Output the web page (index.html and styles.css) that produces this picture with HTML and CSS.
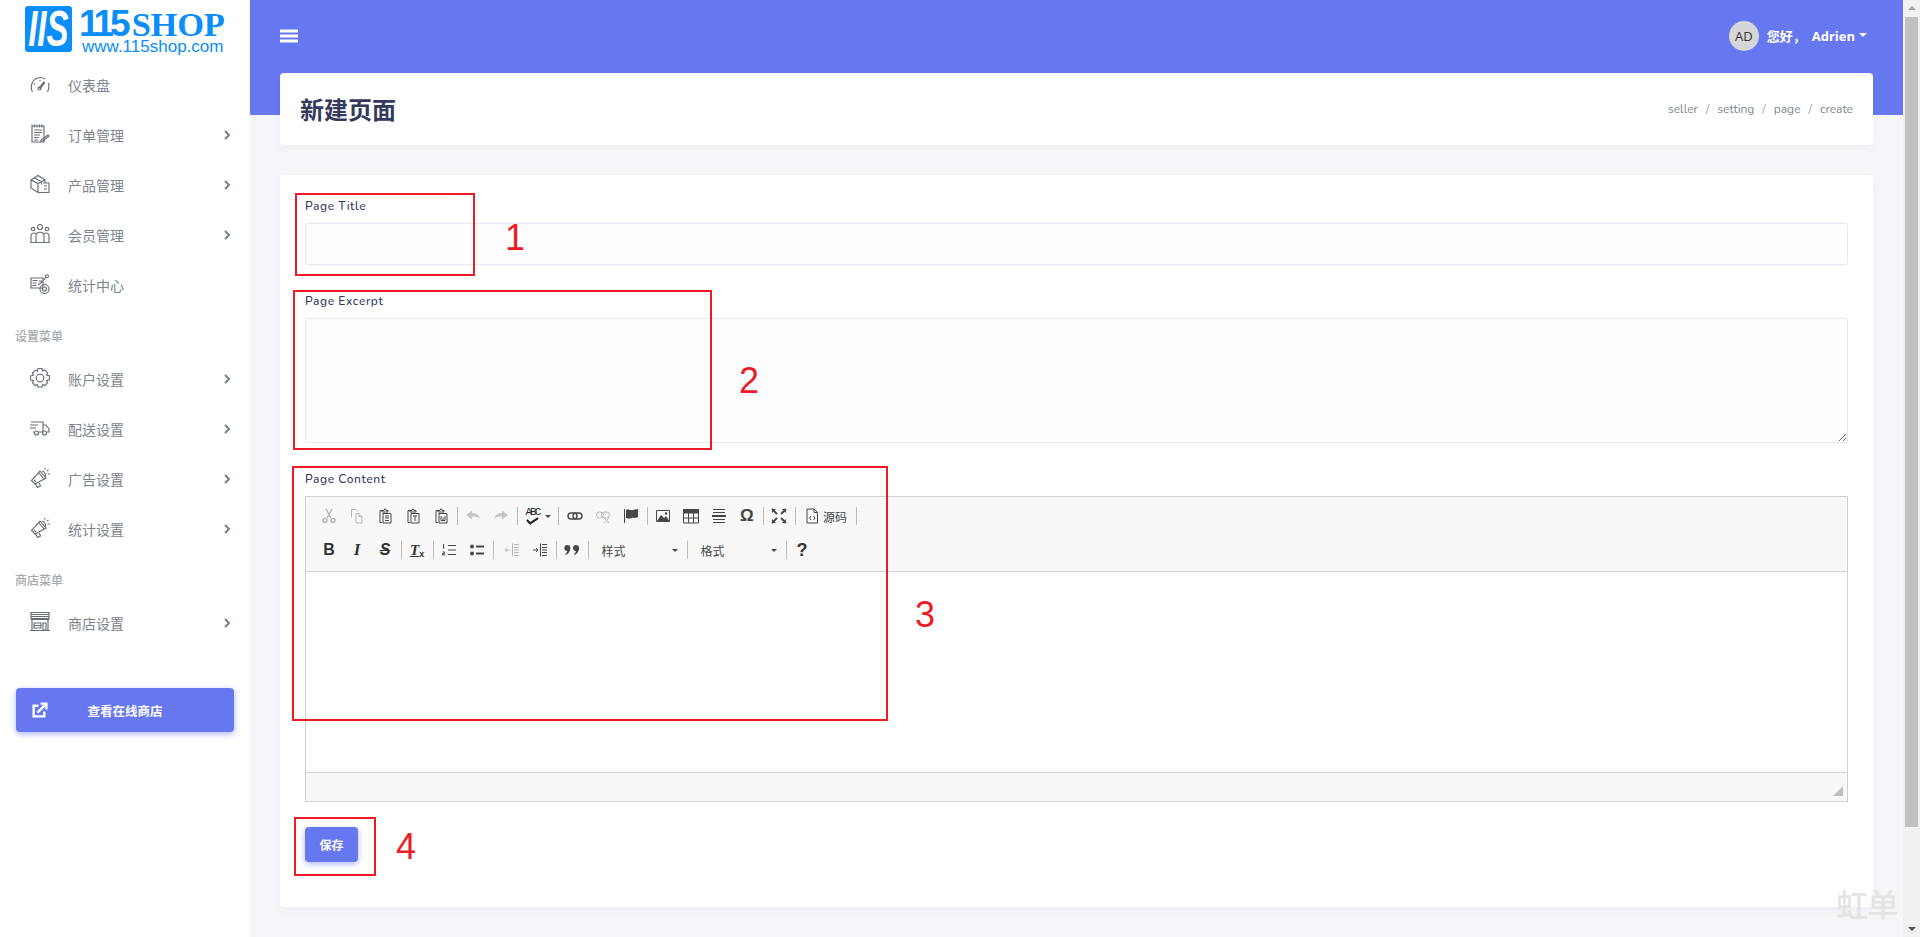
FILE: index.html
```html
<!DOCTYPE html>
<html lang="zh">
<head>
<meta charset="utf-8">
<title>新建页面</title>
<link rel="stylesheet" href="styles.css">
</head>
<body>
<div class="app">
  <aside class="sidebar">
    <div class="logo">
      <div class="logo-tile"><span>IIS</span></div>
      <div class="logo-text">
        <div class="logo-name"><b>115</b><i>SHOP</i></div>
        <div class="logo-url">www.115shop.com</div>
      </div>
    </div>
    <nav class="menu">
      <a class="item"><svg class="ic" viewBox="0 0 20 20"><path d="M2.500 18C-.5 12 2.500 4 10 3.500c2 0 3.500.5 5 1.500M18.500 9c.8 3 .4 6-1 9M4 9.500l1 1M10 6v1"/><path class="ndl" d="M9.500 14.500l5-6.500"/><circle cx="9.500" cy="14.500" r="1.500"/></svg><span>仪表盘</span></a>
      <a class="item"><svg class="ic" viewBox="0 0 20 20"><path d="M2 2h12v16H2zM2 .5v3M4.500 .5v3M7 .5v3M9.500 .5v3M12 .5v3M4 6h8M4 8.500h8M4 11h6M4 13.500h5M4 16h4"/><path d="M11 16l7-5 1 1-6 5-2 .5z"/></svg><span>订单管理</span><svg class="chev" viewBox="0 0 6 10"><path d="M1 1l4 4-4 4"/></svg></a>
      <a class="item"><svg class="ic" viewBox="0 0 20 20"><path d="M1 6l7-4.500L15 6l-7 3.500zM1 6v8l7 4.500V9.500M15 6v3M8 18.500h11V9h-6M4.500 4l7 3.500v3"/><path d="M14 12h3M14 15h3"/></svg><span>产品管理</span><svg class="chev" viewBox="0 0 6 10"><path d="M1 1l4 4-4 4"/></svg></a>
      <a class="item"><svg class="ic" viewBox="0 0 20 20"><circle cx="10" cy="3" r="2.500"/><circle cx="3" cy="5" r="1.700"/><circle cx="17" cy="5" r="1.700"/><path d="M6 18.500V12c0-5 8-5 8 0v6.500zM6 18.500H1V12c0-3 3-3.500 5-2.500M14 18.500h5V12c0-3-3-3.500-5-2.500"/></svg><span>会员管理</span><svg class="chev" viewBox="0 0 6 10"><path d="M1 1l4 4-4 4"/></svg></a>
      <a class="item"><svg class="ic" viewBox="0 0 20 20"><path d="M1 4h12v10H1zM2.500 6.500h5M2.500 9h4M2.500 11.500h4M9 7h3M8 11l4-3 4-5"/><circle cx="17" cy="2.200" r="1.500"/><circle cx="14.500" cy="15" r="4.500"/><circle cx="14.500" cy="15" r="2"/></svg><span>统计中心</span></a>
      <div class="section">设置菜单</div>
      <a class="item"><svg class="ic" viewBox="0 0 20 20"><path d="M8 .5h4l.6 2.500 2.200-1 2.800 2.800-1 2.200 2.900.8v4l-2.900.7 1 2.200-2.800 2.800-2.200-1-.6 2.500H8l-.6-2.500-2.200 1-2.800-2.800 1-2.200L.5 12V8l2.900-.8-1-2.200 2.800-2.800 2.200 1z"/><circle cx="10" cy="10" r="3.800"/></svg><span>账户设置</span><svg class="chev" viewBox="0 0 6 10"><path d="M1 1l4 4-4 4"/></svg></a>
      <a class="item"><svg class="ic" viewBox="0 0 20 20"><path d="M1 4h12v10H9M13 7h3l3 4v3h-2M12.500 14H12M0 7h8M0 10h6M3 14h1.500"/><circle cx="6.500" cy="15" r="2"/><circle cx="14.500" cy="15" r="2"/></svg><span>配送设置</span><svg class="chev" viewBox="0 0 6 10"><path d="M1 1l4 4-4 4"/></svg></a>
      <a class="item"><svg class="ic" viewBox="0 0 20 20"><path d="M10 3l6 7-11 6-3.500-3.500zM5.500 15.500l2 4 3-1.500-2-4.500M9 5l5.500 6.500M12 3.500c1.500-1 4 2 3.500 5"/><path d="M14.500 1.500l.8-1.500M17 3l1.500-1M17.500 6H20M4 12l2 2"/></svg><span>广告设置</span><svg class="chev" viewBox="0 0 6 10"><path d="M1 1l4 4-4 4"/></svg></a>
      <a class="item"><svg class="ic" viewBox="0 0 20 20"><path d="M10 3l6 7-11 6-3.500-3.500zM5.500 15.500l2 4 3-1.500-2-4.500M9 5l5.500 6.500M12 3.500c1.500-1 4 2 3.500 5"/><path d="M14.500 1.500l.8-1.500M17 3l1.500-1M17.500 6H20M4 12l2 2"/></svg><span>统计设置</span><svg class="chev" viewBox="0 0 6 10"><path d="M1 1l4 4-4 4"/></svg></a>
      <div class="section section-2">商店菜单</div>
      <a class="item"><svg class="ic" viewBox="0 0 20 20"><path d="M1 .5h18v6H1zM1 2.500h18M1 4.500h18M1 7.500h18M2 8v10M18 8v10M0 18.500h20M4 11h7v5H4zM4 13.500h7M13 11h3v7h-3z"/></svg><span>商店设置</span><svg class="chev" viewBox="0 0 6 10"><path d="M1 1l4 4-4 4"/></svg></a>
    </nav>
    <a class="shop-btn"><svg class="ext" viewBox="0 0 16 16"><path d="M12.500 9v4.500h-10v-10H7"/><path d="M6 10l8-8M9 1.500h5.500V7" /></svg><span>查看在线商店</span></a>
  </aside>

  <main class="main">
    <section class="hero">
      <div class="topbar">
        <svg class="burger" viewBox="0 0 18 14"><path d="M0 2h18M0 7h18M0 12h18"/></svg>
        <div class="user"><span class="avatar">AD</span><span class="hello">您好， Adrien</span><span class="caret"></span></div>
      </div>
      <div class="title-card">
        <h1>新建页面</h1>
        <div class="crumbs"><span>seller</span><em>/</em><span>setting</span><em>/</em><span>page</span><em>/</em><span>create</span></div>
      </div>
    </section>

    <section class="card">
      <label class="lbl">Page Title</label>
      <input class="field" type="text">
      <label class="lbl lbl-excerpt">Page Excerpt</label>
      <textarea class="field area"></textarea>
      <label class="lbl lbl-content">Page Content</label>

      <div class="editor">
        <div class="tools">
          <div class="row">
            <span class="b off"><svg viewBox="0 0 16 16"><path d="M5 1l5 9M11 1L6 10"/><circle cx="4" cy="12.500" r="2"/><circle cx="12" cy="12.500" r="2"/></svg></span>
            <span class="b off"><svg class="thin" viewBox="0 0 16 16"><path d="M2.500 9.500v-8H7l2 2M7 5.500h3l3 3v6.500H7zM10 5.500v3h3"/></svg></span>
            <span class="b"><svg class="thin" viewBox="0 0 16 16"><path d="M5 2.500H3v12h2M11 3V2.500H9L8.500 1h-1L7 2.500H5V4h6zM6 5.500h8v9.500H6zM8 8h4M8 10h4M8 12.500h4"/></svg></span>
            <span class="b"><svg class="thin" viewBox="0 0 16 16"><path d="M5 2.500H3v12h2M11 3V2.500H9L8.500 1h-1L7 2.500H5V4h6zM6 5.500h8v9.500H6zM8 8h4M10 8v5"/></svg></span>
            <span class="b"><svg class="thin" viewBox="0 0 16 16"><path d="M5 2.500H3v12h2M11 3V2.500H9L8.500 1h-1L7 2.500H5V4h6zM6 5.500h8v9.500H6zM8 8v4.500h4V8M10 9.500v3"/></svg></span>
            <i class="sep"></i>
            <span class="b off"><svg class="solid" viewBox="0 0 16 16"><path d="M1 7l6-4.500V5c4 0 7 2 8 6-2-2-4-2.800-8-2.500v3z"/></svg></span>
            <span class="b off"><svg class="solid" viewBox="0 0 16 16"><path d="M15 7L9 2.500V5c-4 0-7 2-8 6 2-2 4-2.800 8-2.500v3z"/></svg></span>
            <i class="sep"></i>
            <span class="b spell"><span class="abc">ABC</span><svg class="chk" viewBox="0 0 16 8"><path d="M2 3l3.500 3.500L14 1"/></svg><i class="arrow"></i></span>
            <i class="sep"></i>
            <span class="b"><svg class="link" viewBox="0 0 16 16"><rect x="1" y="5" width="9" height="6" rx="3"/><rect x="6" y="5" width="9" height="6" rx="3"/></svg></span>
            <span class="b off"><svg class="thin" viewBox="0 0 16 16"><rect x="1.500" y="4" width="7" height="6" rx="3"/><rect x="6.500" y="4" width="8" height="6" rx="3"/><path d="M9 10l5 5M14 10l-5 5"/></svg></span>
            <span class="b"><svg class="thin" viewBox="0 0 16 16"><path d="M1.500 1v14"/><path class="fill" d="M3 2c3-1.500 4 1 7 0s3-.5 5-1v8c-3 1.500-4 .5-6 1s-4 1-6 0z"/></svg></span>
            <i class="sep"></i>
            <span class="b"><svg class="thin" viewBox="0 0 16 16"><path d="M1.500 2.500h13v11h-13z"/><path class="fill" d="M2 13l4-6 3 3 2-2 3.500 5z"/><circle class="fill" cx="11" cy="5.500" r="1.200"/></svg></span>
            <span class="b"><svg class="thin" viewBox="0 0 16 16"><path class="fill" d="M0 1h16v4H0z"/><path d="M.5 1v14h15V1M.5 10h15M5.500 5v10M10.500 5v10M.5 5h15"/></svg></span>
            <span class="b"><svg class="thin" viewBox="0 0 16 16"><path d="M2 1.500h12M2 4.500h12M2 11.500h12M2 14.500h12"/><path class="thickline" d="M1 8h14"/></svg></span>
            <span class="b omega">Ω</span>
            <i class="sep"></i>
            <span class="b"><svg class="thick" viewBox="0 0 16 16"><path d="M1 1l5 5M15 1l-5 5M1 15l5-5M15 15l-5-5"/><path class="fill" d="M1 1h4L1 5zM15 1h-4l4 4zM1 15h4l-4-4zM15 15h-4l4-4z"/></svg></span>
            <i class="sep sep-wide"></i>
            <span class="b source"><svg class="thin" viewBox="0 0 16 16"><path d="M3 1h7l3.500 3.500V15H3zM10 1v3.500h3.500M7 8L5.500 10 7 12M9.500 8l1.500 2-1.500 2"/></svg><span>源码</span></span>
            <i class="sep sep-end"></i>
          </div>
          <div class="row row-2">
            <span class="b glyph"><b>B</b></span>
            <span class="b glyph"><b class="it">I</b></span>
            <span class="b glyph"><b class="strike">S</b></span>
            <i class="sep"></i>
            <span class="b tx"><b>T</b><sub>x</sub></span>
            <i class="sep"></i>
            <span class="b"><svg class="thin" viewBox="0 0 16 16"><path d="M7 3.500h8M7 8h8M7 12.500h8"/><path d="M2.500 2v4M2 6h1.500M1.500 10h2v1.500h-2V13h2.500"/></svg></span>
            <span class="b"><svg class="thin" viewBox="0 0 16 16"><circle class="fill" cx="3" cy="4.500" r="2"/><circle class="fill" cx="3" cy="11.500" r="2"/><path class="thickline" d="M7 4.500h8M7 11.500h8"/></svg></span>
            <i class="sep sep-g"></i>
            <span class="b off"><svg class="thin" viewBox="0 0 16 16"><path d="M8.500 1.500v13M10 2.500h5M10 5.500h5M10 8h5M10 10.500h5M10 13.500h5M1 8h5M3 6L1 8l2 2"/></svg></span>
            <span class="b"><svg class="thin" viewBox="0 0 16 16"><path d="M8.500 1.500v13M10 2.500h5M10 5.500h5M10 8h5M10 10.500h5M10 13.500h5M1 8h5M4 6l2 2-2 2"/></svg></span>
            <i class="sep"></i>
            <span class="b"><svg class="quote" viewBox="0 0 16 16"><circle cx="3.300" cy="6" r="3"/><circle cx="12" cy="6" r="3"/><path d="M6.300 6c0 3.500-2 6-4.500 7l-.5-1c1.500-1 2-2.500 2-4zM15 6c0 3.500-2 6-4.500 7l-.5-1c1.500-1 2-2.500 2-4z"/></svg></span>
            <i class="sep"></i>
            <span class="combo"><span>样式</span><i class="arrow"></i></span>
            <i class="sep"></i>
            <span class="combo"><span>格式</span><i class="arrow"></i></span>
            <i class="sep"></i>
            <span class="b help">?</span>
          </div>
        </div>
        <div class="edit-body"></div>
        <div class="edit-foot"><i class="grip"></i></div>
      </div>

      <button class="save" type="button">保存</button>
    </section>
  </main>

  <div class="scrollbar">
    <i class="sb-up"></i>
    <div class="sb-track"><div class="sb-thumb"></div></div>
    <i class="sb-down"></i>
  </div>
</div>

<div class="mark m1"></div><div class="num n1">1</div>
<div class="mark m2"></div><div class="num n2">2</div>
<div class="mark m3"></div><div class="num n3">3</div>
<div class="mark m4"></div><div class="num n4">4</div>
<div class="watermark">虹单</div>
</body>
</html>
```
FILE: styles.css
```css
* { box-sizing: border-box; }
html, body { margin: 0; height: 937px; overflow: hidden; }
body { font-family: "Nunito", "Open Sans", "Noto Sans CJK SC", sans-serif; font-size: 14px; color: #34395e; background: #f4f6f9; position: relative; }
i, em { font-style: normal; }

.app { display: flex; height: 937px; }

/* sidebar */
.sidebar { width: 250px; flex: none; background: #fff; display: flex; flex-direction: column; }
.logo { height: 60px; padding: 6px 0 0 25px; display: flex; gap: 7px; }
.logo-tile { width: 47px; height: 46px; border-radius: 3px; background: #0b8ef8; color: #fff; display: flex; align-items: center; justify-content: center; }
.logo-tile span { font: italic 700 30px/30px "Liberation Sans", sans-serif; transform: scale(1.1, 1.65); letter-spacing: 0; }
.logo-text { color: #0b8ef8; }
.logo-name { height: 33px; padding-top: 2px; white-space: nowrap; display: flex; align-items: center; }
.logo-name b { font: 700 37px/30px "Liberation Sans", sans-serif; letter-spacing: -4px; margin-right: 5px; }
.logo-name i { font: 700 34.500px/30px "Liberation Serif", serif; letter-spacing: -.3px; }
.logo-url { font: 17px/16px "Liberation Sans", sans-serif; padding-left: 3px; white-space: nowrap; }

.menu { display: flex; flex-direction: column; }
.item { height: 50px; display: flex; align-items: center; padding: 0 20px 0 30px; color: #7d848d; font-size: 14px; font-family: "Noto Sans CJK SC", sans-serif; }
.item span { flex: 1; margin-left: 18px; margin-top: -1px; }
.ic { width: 20px; height: 20px; fill: none; stroke: #666e77; stroke-width: 1.150; flex: none; margin-top: -3px; }
.ic .ndl { stroke-width: 2.200; }
.chev { width: 6px; height: 10px; fill: none; stroke: #7a828a; stroke-width: 2; }
.section { height: 44px; padding: 16px 0 0 15px; font: 500 12px/20px "Noto Sans CJK SC", sans-serif; color: #a4a9ae; }
.section-2 { height: 44px; }

.shop-btn { margin: 40px 0 0 16px; width: 218px; height: 44px; background: #6777ef; border-radius: 4px; box-shadow: 0 2px 6px #acb5f6; color: #fff; display: flex; align-items: center; font: 700 12.500px "Noto Sans CJK SC", sans-serif; }
.ext { width: 17px; height: 17px; margin-left: 15px; fill: none; stroke: #fff; stroke-width: 2.200; }
.shop-btn span { flex: 1; text-align: center; padding-right: 32px; }

/* main */
.main { flex: 1; min-width: 0; }
.hero { height: 115px; background: #6777ef; padding: 0 30px; }
.topbar { height: 73px; padding-bottom: 2px; display: flex; align-items: center; justify-content: space-between; }
.burger { width: 18px; height: 14px; fill: none; stroke: #fff; stroke-width: 3; }
.user { display: flex; align-items: center; color: #fff; margin-right: 6px; }
.avatar { width: 30px; height: 30px; border-radius: 50%; background: #d6d6d6; color: #333; font-size: 13px; display: flex; align-items: center; justify-content: center; margin-right: 8px; font-family: "Open Sans", sans-serif; }
.hello { font: 700 13px "Open Sans", "Noto Sans CJK SC", sans-serif; white-space: pre; word-spacing: 2.500px; }
.caret { margin-left: 4px; border: 4px solid transparent; border-top-color: #fff; border-bottom: 0; margin-top: -2px; }

.title-card { height: 72px; background: #fff; border-radius: 4px; box-shadow: 0 4px 8px rgba(0,0,0,.03); display: flex; align-items: center; justify-content: space-between; padding: 0 20px; }
h1 { margin: 0; font: 700 24px/30px "Noto Sans CJK SC", sans-serif; color: #34395e; }
.crumbs { display: flex; gap: 7px; font-size: 12px; color: #7d8890; }
.crumbs em { color: #98a6ad; margin: 0 1px; }

.card { margin: 60px 30px 0; height: 732px; background: #fff; border-radius: 4px; box-shadow: 0 4px 8px rgba(0,0,0,.03); padding: 23px 25px 0; }
.lbl { display: block; font-size: 12px; line-height: 16px; font-weight: 500; letter-spacing: .6px; color: #34395e; margin-bottom: 9px; }
.lbl-excerpt { margin-top: 28px; margin-bottom: 9px; }
.lbl-content { margin-top: 28px; margin-bottom: 9px; }
.field { display: block; width: 100%; height: 42px; background: #fdfdff; border: 1px solid #e4e6fc; border-radius: 3px; margin: 0; }
.area { height: 125px; resize: vertical; }

/* editor */
.editor { border: 1px solid #d1d1d1; height: 306px; display: flex; flex-direction: column; background: #fff; }
.tools { height: 75px; flex: none; background: #f8f8f8; border-bottom: 1px solid #d1d1d1; padding: 5px 0 0 9px; }
.row { display: flex; align-items: center; height: 28px; }
.row-2 { margin-top: 6px; }
.b { width: 28px; height: 28px; display: flex; align-items: center; justify-content: center; flex: none; color: #333; }
.b svg { width: 16px; height: 16px; fill: none; stroke: #474747; }
.b svg.thin { stroke-width: 1; }
.b svg.thick { stroke-width: 1.800; }
.b svg.link { stroke-width: 1.400; }
.b svg.solid, .b svg.quote { fill: #474747; stroke: none; }
.b svg .fill { fill: #474747; stroke: none; }
.b svg .thickline { stroke-width: 2; }
.b.off svg { stroke: #b8b8b8; stroke-width: 1.500; }
.b.off svg.thin { stroke-width: 1; }
.b.off svg.solid { fill: #c6c6c6; stroke: none; }
.sep { width: 1px; height: 18px; background: #bcbcbc; margin: 0 1.200px 0 2px; flex: none; }
.sep-wide { margin-left: 2px; margin-right: 2px; }
.sep-g { margin-right: 3.200px; }
.spell { width: 37px; position: relative; justify-content: flex-start; padding-left: 6px; }
.abc { font: 11px/9px "Liberation Mono", monospace; color: #222; position: absolute; top: 6px; left: 6px; letter-spacing: -1.900px; }
.b .chk { width: 15px; height: 8px; position: absolute; top: 15px; left: 6px; stroke: #222; stroke-width: 2.200; }
.arrow { width: 0; height: 0; border: 3px solid transparent; border-top-color: #474747; border-bottom: 0; }
.spell .arrow { position: absolute; right: 5px; top: 13px; }
.omega { font: 700 17px "Liberation Sans", sans-serif; color: #474747; }
.source { width: 58px; justify-content: flex-start; padding-left: 6px; gap: 3px; font: 12px "Noto Sans CJK SC", sans-serif; color: #474747; }
.sep-end { margin-left: 0; }
.glyph b { font: 700 16px "Liberation Sans", sans-serif; color: #333; }
.glyph .it { font: italic 700 17px "Liberation Serif", serif; }
.glyph .strike { font: italic 700 16px "Liberation Sans", sans-serif; text-decoration: line-through; }
.tx { font: italic 700 15px "Liberation Serif", serif; color: #333; }
.tx b { text-decoration: underline; }
.tx sub { font: 700 9px "Liberation Sans", sans-serif; position: relative; top: 4px; }
.combo { width: 94.800px; height: 28px; display: flex; align-items: center; justify-content: space-between; padding: 0 7px 0 11.500px; font: 12px "Noto Sans CJK SC", sans-serif; color: #474747; flex: none; }
.help { font: 700 18px "Liberation Sans", sans-serif; color: #333; }
.edit-body { flex: 1; background: #fff; }
.edit-foot { height: 29px; flex: none; background: #f8f8f8; border-top: 1px solid #d1d1d1; display: flex; justify-content: flex-end; align-items: flex-end; padding: 0 4px 5px 0; }
.grip { width: 0; height: 0; border-style: solid; border-width: 0 0 10px 10px; border-color: transparent transparent #bdbdbd transparent; }

.save { display: block; margin-top: 25px; width: 53px; height: 35px; border: 0; border-radius: 4px; background: #6777ef; color: #fff; font: 700 12px "Noto Sans CJK SC", sans-serif; box-shadow: 0 2px 6px #acb5f6; padding: 0; }

/* scrollbar */
.scrollbar { width: 17px; flex: none; background: #f1f1f1; display: flex; flex-direction: column; align-items: center; }
.sb-up, .sb-down { flex: none; width: 0; height: 0; margin: 6px 0; border: 4px solid transparent; }
.sb-up { border-bottom: 4px solid #a3a3a3; border-top: 0; }
.sb-down { border-top: 4px solid #505050; border-bottom: 0; }
.sb-track { flex: 1; width: 100%; padding: 0 2px; }
.sb-thumb { height: 810px; margin-top: 1px; background: #c1c1c1; }

/* annotations over the page */
.mark { position: absolute; border: 2px solid #ed1c24; }
.m1 { left: 295px; top: 193px; width: 180px; height: 83px; }
.m2 { left: 293px; top: 290px; width: 419px; height: 160px; }
.m3 { left: 292px; top: 466px; width: 596px; height: 255px; }
.m4 { left: 294px; top: 817px; width: 82px; height: 59px; }
.num { position: absolute; font: 36px/40px "Liberation Sans", sans-serif; color: #ed1c24; }
.n1 { left: 505px; top: 218px; }
.n2 { left: 739px; top: 361px; }
.n3 { left: 915px; top: 595px; }
.n4 { left: 396px; top: 827px; }
.watermark { position: absolute; left: 1836px; top: 885px; font: 500 32px/36px "Noto Sans CJK SC", sans-serif; color: #e4e4e4; letter-spacing: -1px; }
```
